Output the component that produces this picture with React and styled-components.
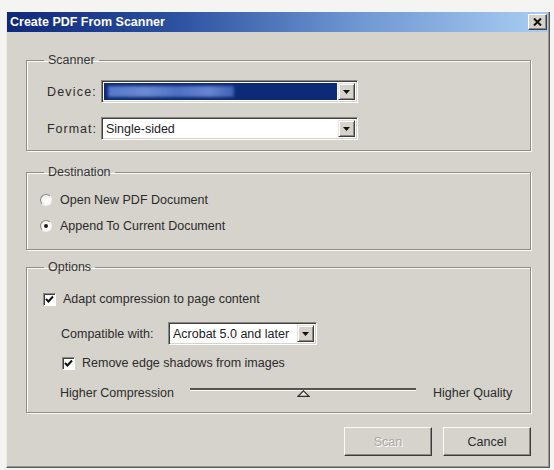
import React from 'react';
import styled, { createGlobalStyle, css } from 'styled-components';

const GlobalStyle = createGlobalStyle`
  html, body {
    margin: 0;
    padding: 0;
    background: #f4f4f2;
  }
  body {
    font-family: "Liberation Sans", Arial, sans-serif;
    font-size: 12.5px;
    color: #2b2b2b;
  }
`;

// Window frame
const Window = styled.div`
  margin: 12px 0 0 6px;
  width: 544px;
  height: 456px;
  box-sizing: border-box;
  background: #d6d3cc;
  border-right: 1px solid #5a5a5a;
  border-bottom: 1px solid #5a5a5a;
  border-left: 1px solid #ecebe6;
  box-shadow: inset -1px -1px 0 #9a9892;
  display: flex;
  flex-direction: column;
`;

const TitleBar = styled.div`
  height: 20px;
  margin-right: 1px;
  display: flex;
  align-items: center;
  justify-content: space-between;
  padding: 0 1px 0 3px;
  background: linear-gradient(90deg, #10287a 0%, #2a4f9f 30%, #6f97d2 65%, #a9cdf2 100%);
`;

const TitleText = styled.span`
  color: #fff;
  font-weight: bold;
  font-size: 12.5px;
`;

const CloseButton = styled.div`
  width: 19px;
  height: 16px;
  box-sizing: border-box;
  display: flex;
  align-items: center;
  justify-content: center;
  background: #d6d3cc;
  border: 1px solid;
  border-color: #fff #404040 #404040 #fff;
  box-shadow: inset -1px -1px 0 #8c8a85;
`;

const Body = styled.div`
  padding: 0 18px 0 19px;
  display: flex;
  flex-direction: column;
`;

// Etched group box
const Group = styled.fieldset`
  margin: ${(p) => p.$top}px 0 0;
  padding: 0;
  min-width: 0;
  border: 1px solid #8f8d88;
  box-shadow: 1px 1px 0 #fbfbf8, inset 1px 1px 0 #fbfbf8;
`;

const Legend = styled.legend`
  margin-left: 17px;
  padding: 0 4px;
  line-height: 16px;
  color: #333;
`;

const GroupInner = styled.div`
  padding: ${(p) => p.$pad};
  display: flex;
  flex-direction: column;
`;

const Row = styled.div`
  display: flex;
  align-items: center;
  white-space: nowrap;
  height: ${(p) => p.$h || 16}px;
  margin-top: ${(p) => p.$gap || 0}px;
  padding-left: ${(p) => p.$indent || 0}px;
`;

const FieldLabel = styled.span`
  width: ${(p) => p.$w}px;
  text-align: ${(p) => p.$align || 'left'};
  margin-right: ${(p) => p.$gap || 0}px;
  letter-spacing: ${(p) => p.$spread || 0}px;
  flex-shrink: 0;
`;

// Combo box
const ComboBox = styled.div`
  width: ${(p) => p.$w}px;
  height: 23px;
  box-sizing: border-box;
  display: flex;
  border: 1px solid;
  border-color: #8a8883 #fff #fff #8a8883;
  box-shadow: inset 1px 1px 0 #404040, inset -1px -1px 0 #d6d3cc;
  background: #fff;
  padding: 2px;
`;

const ComboValue = styled.div`
  flex: 1;
  display: flex;
  align-items: center;
  padding-left: 2px;
  overflow: hidden;
  color: #222;
  ${(p) =>
    p.$selected &&
    css`
      background: #0b2a78;
      margin-right: 1px;
    `}
`;

const HiddenName = styled.div`
  width: 126px;
  height: 11px;
  margin-left: 2px;
  background: linear-gradient(90deg, #5478c8 0%, #6b8ad0 30%, #4d70c2 55%, #6785cf 80%, #3e5fb2 100%);
  filter: blur(1.5px);
`;

const ComboArrow = styled.div`
  width: 17px;
  flex-shrink: 0;
  box-sizing: border-box;
  display: flex;
  align-items: center;
  justify-content: center;
  background: #d6d3cc;
  border: 1px solid;
  border-color: #e6e4df #404040 #404040 #e6e4df;
  box-shadow: inset 1px 1px 0 #fff, inset -1px -1px 0 #8c8a85;
`;

const DownTriangle = () => (
  <svg width="7" height="4" viewBox="0 0 7 4">
    <path d="M0 0h7L3.5 4z" fill="#111" />
  </svg>
);

const Combo = ({ width, value, selected }) => (
  <ComboBox $w={width}>
    <ComboValue $selected={selected}>{selected ? <HiddenName /> : value}</ComboValue>
    <ComboArrow>
      <DownTriangle />
    </ComboArrow>
  </ComboBox>
);

// Radio buttons and check boxes
const RadioCircle = styled.span`
  width: 12px;
  height: 12px;
  box-sizing: border-box;
  border-radius: 50%;
  border: 1px solid;
  border-color: #8a8883 #f4f4f2 #f4f4f2 #8a8883;
  background: radial-gradient(circle at 60% 60%, #ffffff 0%, #f1f0ec 70%);
  display: flex;
  align-items: center;
  justify-content: center;
  margin-right: 8px;
  flex-shrink: 0;
  &::after {
    content: '';
    width: 4px;
    height: 4px;
    border-radius: 50%;
    background: #1a1a1a;
    display: ${(p) => (p.$checked ? 'block' : 'none')};
  }
`;

const CheckBox = styled.span`
  width: 13px;
  height: 13px;
  box-sizing: border-box;
  border: 1px solid;
  border-color: #8a8883 #fff #fff #8a8883;
  box-shadow: inset 1px 1px 0 #404040;
  background: #fff;
  display: flex;
  align-items: center;
  justify-content: center;
  margin-right: 7px;
  flex-shrink: 0;
`;

const Check = () => (
  <CheckBox>
    <svg width="9" height="9" viewBox="0 0 9 9">
      <path d="M1 4l2.5 2.5L8 1.5" fill="none" stroke="#111" strokeWidth="2" />
    </svg>
  </CheckBox>
);

// Quality slider
const Track = styled.div`
  position: relative;
  width: 226px;
  height: 16px;
  margin: 0 17px;
  flex-shrink: 0;
  &::before {
    content: '';
    position: absolute;
    left: 0;
    right: 0;
    top: 3px;
    height: 2px;
    background: #55534f;
    box-shadow: 0 1px 0 #fbfbf8;
  }
`;

const Thumb = styled.svg`
  position: absolute;
  left: ${(p) => p.$at}px;
  top: 5px;
`;

// Dialog buttons
const ButtonBar = styled.div`
  display: flex;
  justify-content: flex-end;
  gap: 11px;
  margin-top: 14px;
`;

const PushButton = styled.div`
  width: 88px;
  height: 29px;
  box-sizing: border-box;
  display: flex;
  align-items: center;
  justify-content: center;
  border: 1px solid;
  border-color: #fbfbf8 #3a3a3a #3a3a3a #fbfbf8;
  box-shadow: inset -1px -1px 0 #8c8a85;
  color: ${(p) => (p.$disabled ? '#a9a7a1' : '#2b2b2b')};
  text-shadow: ${(p) => (p.$disabled ? '1px 1px 0 #fff' : 'none')};
`;

export default function App() {
  return (
    <>
      <GlobalStyle />
      <Window>
        <TitleBar>
          <TitleText>Create PDF From Scanner</TitleText>
          <CloseButton>
            <svg width="9" height="8" viewBox="0 0 9 8">
              <path d="M1 0.5l7 7M8 0.5l-7 7" stroke="#111" strokeWidth="2" />
            </svg>
          </CloseButton>
        </TitleBar>

        <Body>
          <Group $top={20}>
            <Legend>Scanner</Legend>
            <GroupInner $pad="12px 0 10px 0">
              <Row $h={23}>
                <FieldLabel $w={70} $align="right" $gap={4} $spread={1.2}>Device:</FieldLabel>
                <Combo width={257} selected />
              </Row>
              <Row $h={23} $gap={14}>
                <FieldLabel $w={70} $align="right" $gap={4} $spread={1}>Format:</FieldLabel>
                <Combo width={257} value="Single-sided" />
              </Row>
            </GroupInner>
          </Group>

          <Group $top={13}>
            <Legend>Destination</Legend>
            <GroupInner $pad="12px 0 15px 0">
              <Row $indent={13}>
                <RadioCircle />
                Open New PDF Document
              </Row>
              <Row $indent={13} $gap={10}>
                <RadioCircle $checked />
                Append To Current Document
              </Row>
            </GroupInner>
          </Group>

          <Group $top={9}>
            <Legend>Options</Legend>
            <GroupInner $pad="16px 0 11px 0">
              <Row $indent={16}>
                <Check />
                Adapt compression to page content
              </Row>
              <Row $h={23} $gap={15} $indent={34}>
                <FieldLabel $w={107}>Compatible with:</FieldLabel>
                <Combo width={149} value="Acrobat 5.0 and later" />
              </Row>
              <Row $gap={10} $indent={35}>
                <Check />
                Remove edge shadows from images
              </Row>
              <Row $gap={14} $indent={33}>
                <FieldLabel $w={113}>Higher Compression</FieldLabel>
                <Track>
                  <Thumb $at={107} width="13" height="7" viewBox="0 0 13 7">
                    <path d="M6.5 0.8L12 6.3H1z" fill="#e9e7e2" stroke="#2e2e2e" strokeWidth="1.2" />
                  </Thumb>
                </Track>
                <span>Higher Quality</span>
              </Row>
            </GroupInner>
          </Group>

          <ButtonBar>
            <PushButton $disabled>Scan</PushButton>
            <PushButton>Cancel</PushButton>
          </ButtonBar>
        </Body>
      </Window>
    </>
  );
}
